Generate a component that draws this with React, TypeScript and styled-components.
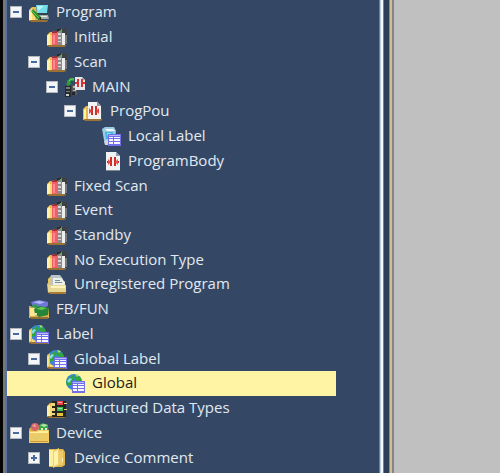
import React, { useState } from "react";
import styled, { createGlobalStyle } from "styled-components";

const GlobalStyle = createGlobalStyle`
  * { box-sizing: border-box; }
  body {
    margin: 0;
    background: #c0c0c0;
    font-family: "Open Sans", "Noto Sans", sans-serif;
    font-size: 15px;
  }
`;

const Window = styled.div`
  display: flex;
  min-height: 100vh;
`;

const Edge = styled.div<{ $w: number; $color: string }>`
  flex: 0 0 ${(p) => p.$w}px;
  background: ${(p) => p.$color};
`;

const Panel = styled.nav`
  flex: 0 0 auto;
  width: calc(75% - 3px);
  min-width: 240px;
  display: flex;
  background: #344866;
`;

const Workspace = styled.main`
  flex: 1;
  background: #c0c0c0;
`;

const Tree = styled.ul`
  flex: 1;
  margin: 0;
  padding: 0 43px 3px 0;
  list-style: none;
  display: grid;
  grid-auto-rows: minmax(24px, 1fr);
`;

const Row = styled.li<{ $level: number; $selected: boolean }>`
  display: flex;
  align-items: center;
  gap: 6px;
  padding-left: ${(p) => 3 + p.$level * 18}px;
  white-space: nowrap;
  color: ${(p) => (p.$selected ? "#1c1c1c" : "#e2e8ef")};
  background: ${(p) => (p.$selected ? "#fff4a3" : "transparent")};
`;

const Toggle = styled.button`
  flex: 0 0 12px;
  height: 12px;
  padding: 0;
  display: grid;
  place-items: center;
  border: 1px solid #b4b8be;
  background: #f4f5f7;
  color: #48689e;
`;

const ToggleSpace = styled.span`
  flex: 0 0 12px;
`;

const Glyph = styled.svg`
  flex: 0 0 22px;
  width: 22px;
  height: 20px;
`;

const Sign = styled.svg`
  width: 8px;
  height: 8px;
`;

const Name = styled.span`
  line-height: 20px;
  padding-bottom: 2px;
`;

const Folder = () => (
  <>
    <path d="M1 8 4 5h4l2 3v11H1z" fill="#e9b84a" />
    <path d="M1 9 4 6v12H1z" fill="#fff0ad" />
    <path d="M4 8h3v10H4z" fill="#f8d974" />
    <path d="M1 18h19v1l-2 1H3z" fill="#9a7131" />
  </>
);

const Books = () => (
  <>
    <Folder />
    <path d="M6 5l2-1h3v14H6z" fill="#f16068" />
    <path d="M6 5l2-1h3v2H6z" fill="#9b3034" />
    <path d="M7 8h2v9H7z" fill="#ff8a8f" />
    <path d="M11 2l4-1 1 2v15h-5z" fill="#8b8b8e" />
    <path d="M11 2l4-1v2l-4 2z" fill="#292a2c" />
    <path d="M12 6h3v2h-3zm0 4h3v2h-3zm0 4h3v1h-3z" fill="#d5d6d3" />
    <path d="M14 3h1v2h-1z" fill="#65a464" />
    <path d="M16 2l4-1 1 2v13l-2 2h-3z" fill="#3f4044" />
    <path d="M16 6h3v12h-3z" fill="#ececec" />
    <path d="M19 8h2v9h-2z" fill="#77787c" />
  </>
);

const Project = () => (
  <>
    <Folder />
    <path d="M8 3h13l-1 10H9z" fill="#32434d" />
    <path d="M8 3h12l-1 8H9z" fill="#73dceb" />
    <path d="M9 4h7l-6 5z" fill="#b6f5f6" />
    <path d="M7 13h13l1 4H8z" fill="#a2acab" />
    <path d="M12 14h7v1h-7z" fill="#e1e8e5" />
    <path d="M2 8l3-1 8 8-1 3-3-1z" fill="#318e2c" />
    <path d="M3 8l8 8" stroke="#74c74d" />
    <path d="M2 8l1-1h2l-2 3z" fill="#d5dbbd" />
    <path d="M11 16l2-1v3z" fill="#222" />
  </>
);

const Ladder = () => (
  <>
    <path d="M6 1h10l4 4v14H6z" fill="#eff2f2" />
    <path d="M16 1v4h4z" fill="#8f9bab" />
    <path d="M10 6h2v9h-2zM14 6h2v9h-2z" fill="#d52a24" />
    <path d="M7 10h3v2H7zM16 10h3v2h-3z" fill="#d52a24" />
    <path d="M8 8l3 3-3 3zM18 8l-3 3 3 3z" fill="#df5550" />
    <path d="M6 19h14v1H6z" fill="#808894" />
  </>
);

const Main = () => (
  <>
    <path d="M1 9h6v11H1z" fill="#272a2b" />
    <path d="M2 10h4v2H2zm0 4h4v1H2z" fill="#767b79" />
    <path d="M2 17h3v2H2z" fill="#c7cac6" />
    <path d="M8 8h5v10H8z" fill="#565a5c" />
    <path d="M9 9h3v2H9zm0 4h3v1H9z" fill="#b3b7b8" />
    <path d="M8 15h3v3H8z" fill="#222628" />
    <path d="M11 0h7l3 3v10H11z" fill="#e4e8ec" />
    <path d="M18 0v3h3z" fill="#9ba7b5" />
    <path d="M13 2h2v8h-2zm4 0h2v8h-2zM11 5h2v2h-2zM19 5h2v2h-2z" fill="#d43532" />
    <path d="M3 7V4l3-3h4v3H7l-1 2h2L4 9 1 6z" fill="#2a9e39" />
    <path d="M5 4l2-2h3" stroke="#76d26b" fill="none" />
  </>
);

const ProgramUnit = () => (
  <>
    <path d="M1 8 4 5h4v14H1z" fill="#e7b84c" />
    <path d="M2 9l2-2v11H2z" fill="#fff0a8" />
    <path d="M6 1h9l4 4v13H6z" fill="#f2f3f2" />
    <path d="M15 0v5h4z" fill="#8f97a3" />
    <path d="M9 5h2v9H9zM13 5h2v9h-2z" fill="#d02e29" />
    <path d="M7 7l3 3-3 3zM17 7l-3 3 3 3z" fill="#dc4943" />
    <path d="M2 18h18v1l-2 1H3z" fill="#9b7335" />
    <path d="M19 8h1v10h-1z" fill="#595147" />
  </>
);

const Grid = () => (
  <>
    <path d="M8 8h13v12H8z" fill="#7270e8" />
    <path d="M9 11h4v1H9zm5 0h6v1h-6zm-5 2h4v2H9zm5 0h6v2h-6zm-5 3h4v2H9zm5 0h6v2h-6z" fill="#f8f7ff" />
    <path d="M9 9h11v1H9z" fill="#b9b8ff" />
  </>
);

const Globe = () => (
  <>
    <circle cx="10" cy="9" r="8" fill="#3587d8" />
    <path d="M5 5l4-3 2 3-3 3-1 4-4 1-1-5zM12 2l5 3 1 5-4-1-3-3z" fill="#31a63b" />
    <path d="M3 8l3-3 2 1-3 4z" fill="#8ddaf2" />
    <path d="M11 1l4 1-2 2z" fill="#b0e467" />
  </>
);

const LocalLabel = () => (
  <>
    <path d="M2 3l3-2h9l2 4-2 13H5l-1-4z" fill="#9acbe0" />
    <path d="M5 3h8l2 2H7z" fill="#eef8fb" />
    <path d="M5 6h8l-1 7H6z" fill="#3cb6e7" />
    <path d="M7 7h4l-3 4z" fill="#8af0fb" />
    <path d="M4 15l4-1v5H5z" fill="#ced8db" />
    <Grid />
  </>
);

const GlobalLabel = () => (
  <>
    <Folder />
    <Globe />
    <path d="M1 6l3-2v14H1z" fill="#f0bd4a" />
    <path d="M1 8l2-2v11H1z" fill="#fbe08a" />
    <Grid />
    <path d="M3 19h17v1H3z" fill="#96703a" />
  </>
);

const GlobalItem = () => (
  <>
    <Globe />
    <Grid />
  </>
);

const Unregistered = () => (
  <>
    <path d="M2 5l3-3v16H2z" fill="#eac45e" />
    <path d="M5 1h9l3 4v10H4z" fill="#b8c5ca" />
    <path d="M7 4h8l4 4v8H7z" fill="#edf0e9" />
    <path d="M9 6h5v1H9zm0 2h7v1H9z" fill="#7c8b98" />
    <path d="M1 9l2 2h17v8H2z" fill="#e8d896" />
    <path d="M5 12h14v2H5z" fill="#fff3bd" />
    <path d="M2 18h18v2H4z" fill="#a97c35" />
  </>
);

const FunctionBlock = () => (
  <>
    <path d="M1 7h6l2 2h12v10H1z" fill="#dcb34b" />
    <path d="M2 9h5v8H2z" fill="#ffe68d" />
    <path d="M3 3l8-2 9 2v4l-5 2-10-1z" fill="#6f78d8" />
    <path d="M5 3l6-1 6 1-5 2z" fill="#b3b9f7" />
    <path d="M2 8l5-3 4 2-2 2z" fill="#319d50" />
    <path d="M6 10l6-3 9 2-1 7-9 2-4-3z" fill="#278539" />
    <path d="M8 10l5-2 6 1-5 2z" fill="#66c74e" />
    <path d="M6 14h3v2H6z" fill="#e7e7a5" />
    <path d="M2 18h18v2H3z" fill="#8f7134" />
  </>
);

const Structured = () => (
  <>
    <Folder />
    <path d="M6 3h14v16H6z" fill="#26251e" />
    <path d="M11 3h6v4h-6z" fill="#ed4148" />
    <path d="M11 9h6v4h-6z" fill="#42bf50" />
    <path d="M11 15h6v3h-6z" fill="#e6c33b" />
    <path d="M5 5h4v3H5zm0 5h4v3H5zm0 5h4v2H5zM18 5h3v1h-3zm0 6h3v1h-3z" fill="#f0d77c" />
    <path d="M12 4h4v1h-4zm0 6h4v1h-4z" fill="#fff" opacity=".5" />
  </>
);

const Device = () => (
  <>
    <path d="M1 6 4 3h16l1 16H1z" fill="#dba93c" />
    <circle cx="7" cy="4" r="4" fill="#d26669" />
    <path d="M4 3l3-2 1 3z" fill="#f3aaa4" />
    <path d="M11 2l4-2 5 2v6l-4 2-5-2z" fill="#34a74b" />
    <path d="M12 2l4-1 4 1-4 2z" fill="#b8e6a7" />
    <path d="M13 5h2v3h-2zm4 0h2v3h-2z" fill="#e4efcc" />
    <path d="M1 8h7l2-1h11v13H1z" fill="#efcb61" />
    <path d="M2 9h7l2-1h9v2H2z" fill="#fff0a1" />
    <path d="M5 12l3 4 5-4" stroke="#bccf9a" fill="none" />
    <path d="M2 18h18v1H2z" fill="#c99840" />
  </>
);

const CommentFolder = () => (
  <>
    <path d="M3 1h14l2 3v13l-3 2H3z" fill="#dfb751" />
    <path d="M3 2h5v16H3z" fill="#fff0a0" />
    <path d="M7 3l6-3v17l-6 3z" fill="#efd16d" />
    <path d="M8 4l4-2v14l-4 2z" fill="#fff2ac" />
    <path d="M13 3h4v14h-4z" fill="#edcb68" />
    <path d="M16 10h1v4h-1z" fill="#fff4bf" />
  </>
);

type Item = {
  name: string;
  level: number;
  icon: () => React.ReactElement;
  toggle?: "open" | "closed";
  selected?: boolean;
};

const items: Item[] = [
  { name: "Program", level: 0, icon: Project, toggle: "open" },
  { name: "Initial", level: 1, icon: Books },
  { name: "Scan", level: 1, icon: Books, toggle: "open" },
  { name: "MAIN", level: 2, icon: Main, toggle: "open" },
  { name: "ProgPou", level: 3, icon: ProgramUnit, toggle: "open" },
  { name: "Local Label", level: 4, icon: LocalLabel },
  { name: "ProgramBody", level: 4, icon: Ladder },
  { name: "Fixed Scan", level: 1, icon: Books },
  { name: "Event", level: 1, icon: Books },
  { name: "Standby", level: 1, icon: Books },
  { name: "No Execution Type", level: 1, icon: Books },
  { name: "Unregistered Program", level: 1, icon: Unregistered },
  { name: "FB/FUN", level: 0, icon: FunctionBlock },
  { name: "Label", level: 0, icon: GlobalLabel, toggle: "open" },
  { name: "Global Label", level: 1, icon: GlobalLabel, toggle: "open" },
  { name: "Global", level: 2, icon: GlobalItem, selected: true },
  { name: "Structured Data Types", level: 1, icon: Structured },
  { name: "Device", level: 0, icon: Device, toggle: "open" },
  { name: "Device Comment", level: 1, icon: CommentFolder, toggle: "closed" },
];

function TreeRow({ item }: { item: Item }) {
  const [open, setOpen] = useState(item.toggle === "open");
  const Icon = item.icon;
  return (
    <Row $level={item.level} $selected={!!item.selected}>
      {item.toggle ? (
        <Toggle aria-label={item.name} aria-expanded={open} onClick={() => setOpen(!open)}>
          <Sign viewBox="0 0 8 8" aria-hidden="true">
            <path d={open ? "M1 3h6v2H1z" : "M1 3h2V1h2v2h2v2H5v2H3V5H1z"} fill="currentColor" />
          </Sign>
        </Toggle>
      ) : (
        <ToggleSpace />
      )}
      <Glyph viewBox="0 0 22 20" aria-hidden="true">
        <Icon />
      </Glyph>
      <Name>{item.name}</Name>
    </Row>
  );
}

export default function App() {
  return (
    <Window>
      <GlobalStyle />
      <Edge $w={3} $color="#050505" />
      <Edge $w={2} $color="#777777" />
      <Edge $w={2} $color="#56749f" />
      <Panel aria-label="Project tree">
        <Tree>
          {items.map((item) => (
            <TreeRow key={item.name} item={item} />
          ))}
        </Tree>
      </Panel>
      <Edge $w={1} $color="#5f83b8" />
      <Edge $w={1} $color="#b9cfe8" />
      <Edge $w={2} $color="#f6f8f8" />
      <Edge $w={1} $color="#78828f" />
      <Edge $w={5} $color="#2c3c59" />
      <Edge $w={1} $color="#8f8a78" />
      <Edge $w={2} $color="#cfc092" />
      <Edge $w={2} $color="#858585" />
      <Workspace />
    </Window>
  );
}
